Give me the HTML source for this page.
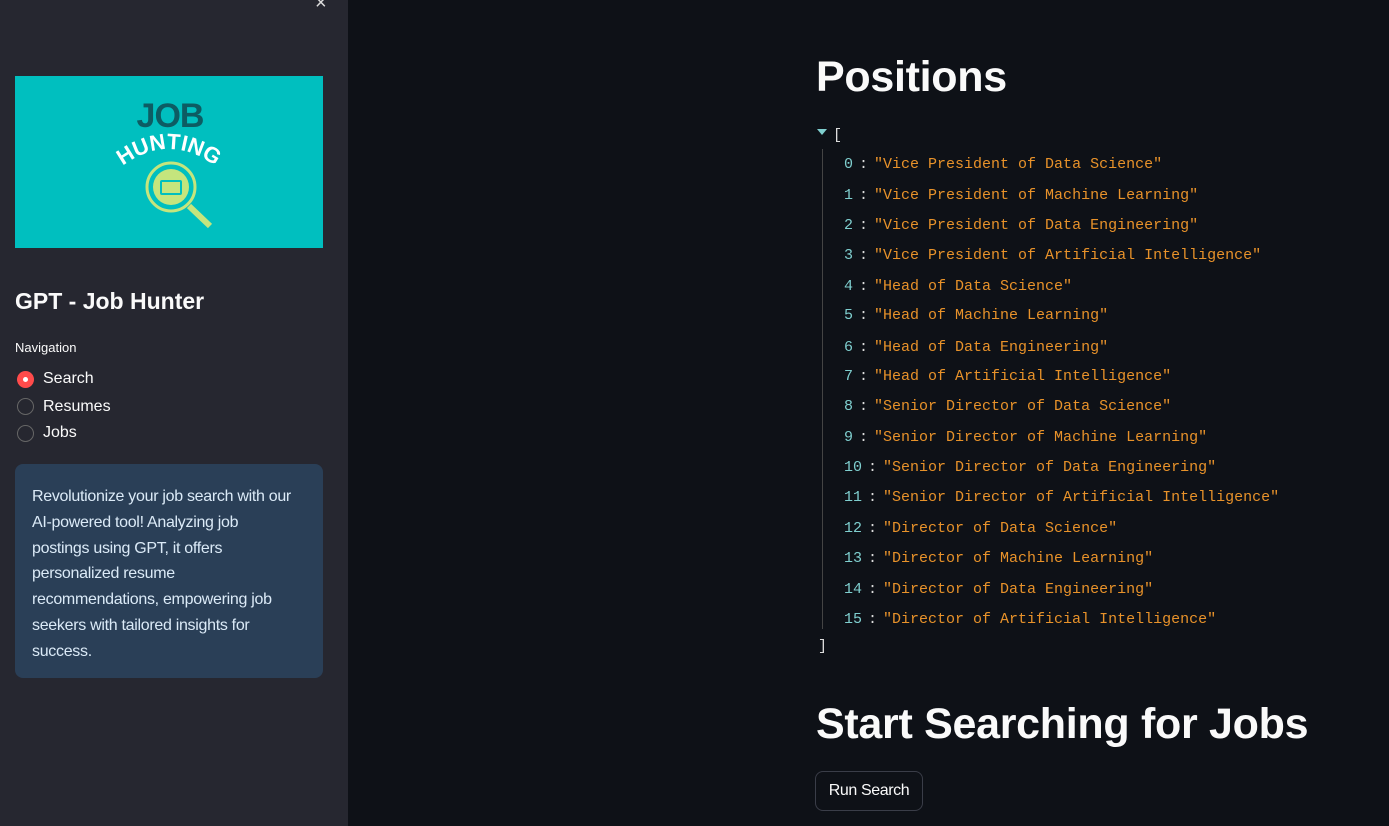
<!DOCTYPE html>
<html><head><meta charset="utf-8"><style>
*{margin:0;padding:0;box-sizing:border-box}
body{width:1389px;height:826px;background:#0e1117;font-family:"Liberation Sans",sans-serif;position:relative;overflow:hidden;color:#fafafa}
.sb{position:absolute;left:0;top:0;width:348px;height:826px;background:#262730}
.abs{position:absolute}
.rows{position:absolute;left:844px;top:2px}
.row{position:absolute;left:0;font-family:"Liberation Mono",monospace;font-size:15px;white-space:pre;line-height:18px}
.k{color:#7fcfcf}.c{color:#ddd;margin:0 6px}.s{color:#e8922a}
.radio{position:absolute;left:17px;width:17px;height:17px;border-radius:50%;border:1px solid #666}
.rl{position:absolute;left:43px;font-size:16px;color:#fafafa}
</style></head><body>
<div class="sb">
<div class="abs" style="left:315px;top:-8px;font-size:20px;color:#ddd">×</div>
<div class="abs" style="left:15px;top:76px;width:308px;height:172px;background:#00bfbf">
<svg width="308" height="172" viewBox="0 0 308 172">
<text x="155" y="51" text-anchor="middle" font-family="Liberation Sans" font-weight="bold" font-size="34" fill="#0d5c63" letter-spacing="-1">JOB</text>
<path id="arc" d="M100 96 Q154 50 208 96" fill="none"/>
<text font-family="Liberation Sans" font-weight="bold" font-size="22" fill="#fff"><textPath href="#arc" startOffset="50%" text-anchor="middle">HUNTING</textPath></text>
<circle cx="156" cy="111" r="24" fill="none" stroke="#c5e57d" stroke-width="3"/>
<circle cx="156" cy="111" r="18" fill="#c5e57d"/>
<rect x="145" y="104" width="22" height="15" fill="#00bfbf" rx="2"/>
<rect x="147" y="106" width="18" height="11" fill="#c5e57d"/>
<line x1="174" y1="130" x2="195" y2="150" stroke="#c5e57d" stroke-width="6"/>
</svg></div>
<div class="abs" style="left:15px;top:288px;font-size:23px;font-weight:bold">GPT - Job Hunter</div>
<div class="abs" style="left:15px;top:340px;font-size:13px">Navigation</div>
<div class="radio" style="top:371px;background:#ff4b4b;border-color:#ff4b4b"><div style="position:absolute;left:5px;top:5px;width:5px;height:5px;border-radius:50%;background:#fff"></div></div>
<div class="rl" style="top:370px">Search</div>
<div class="radio" style="top:398px"></div><div class="rl" style="top:398px">Resumes</div>
<div class="radio" style="top:425px"></div><div class="rl" style="top:424px">Jobs</div>
<div class="abs" style="left:15px;top:464px;width:308px;height:214px;background:#2a3f57;border-radius:8px;padding:20px 10px 0 17px;font-size:16px;line-height:25.8px;color:#dbeaf7;letter-spacing:-0.3px;white-space:nowrap">Revolutionize your job search with our<br>AI-powered tool! Analyzing job<br>postings using GPT, it offers<br>personalized resume<br>recommendations, empowering job<br>seekers with tailored insights for<br>success.</div>
</div>
<div class="abs" style="left:816px;top:53px;font-size:43px;font-weight:bold;letter-spacing:-0.3px">Positions</div>
<svg class="abs" style="left:817px;top:129px" width="10" height="7"><path d="M0 0L10 0L5 6Z" fill="#7fcfcf"/></svg>
<div class="abs" style="left:833px;top:127px;font-family:'Liberation Mono',monospace;font-size:15px;color:#ddd">[</div>
<div class="abs" style="left:822px;top:149px;width:1px;height:480px;background:#444"></div>
<div class="rows">
<div class="row" style="top:154px"><span class="k">0</span><span class="c">:</span><span class="s">"Vice President of Data Science"</span></div>
<div class="row" style="top:185px"><span class="k">1</span><span class="c">:</span><span class="s">"Vice President of Machine Learning"</span></div>
<div class="row" style="top:215px"><span class="k">2</span><span class="c">:</span><span class="s">"Vice President of Data Engineering"</span></div>
<div class="row" style="top:245px"><span class="k">3</span><span class="c">:</span><span class="s">"Vice President of Artificial Intelligence"</span></div>
<div class="row" style="top:276px"><span class="k">4</span><span class="c">:</span><span class="s">"Head of Data Science"</span></div>
<div class="row" style="top:305px"><span class="k">5</span><span class="c">:</span><span class="s">"Head of Machine Learning"</span></div>
<div class="row" style="top:337px"><span class="k">6</span><span class="c">:</span><span class="s">"Head of Data Engineering"</span></div>
<div class="row" style="top:366px"><span class="k">7</span><span class="c">:</span><span class="s">"Head of Artificial Intelligence"</span></div>
<div class="row" style="top:396px"><span class="k">8</span><span class="c">:</span><span class="s">"Senior Director of Data Science"</span></div>
<div class="row" style="top:427px"><span class="k">9</span><span class="c">:</span><span class="s">"Senior Director of Machine Learning"</span></div>
<div class="row" style="top:457px"><span class="k">10</span><span class="c">:</span><span class="s">"Senior Director of Data Engineering"</span></div>
<div class="row" style="top:487px"><span class="k">11</span><span class="c">:</span><span class="s">"Senior Director of Artificial Intelligence"</span></div>
<div class="row" style="top:518px"><span class="k">12</span><span class="c">:</span><span class="s">"Director of Data Science"</span></div>
<div class="row" style="top:548px"><span class="k">13</span><span class="c">:</span><span class="s">"Director of Machine Learning"</span></div>
<div class="row" style="top:579px"><span class="k">14</span><span class="c">:</span><span class="s">"Director of Data Engineering"</span></div>
<div class="row" style="top:609px"><span class="k">15</span><span class="c">:</span><span class="s">"Director of Artificial Intelligence"</span></div>
</div>
<div class="abs" style="left:818px;top:638px;font-family:'Liberation Mono',monospace;font-size:15px;color:#ddd">]</div>
<div class="abs" style="left:816px;top:700px;font-size:43px;font-weight:bold;letter-spacing:-0.3px">Start Searching for Jobs</div>
<div class="abs" style="left:815px;top:771px;width:108px;height:40px;border:1px solid #3a3d48;border-radius:8px;font-size:16px;text-align:center;line-height:38px;letter-spacing:-0.4px">Run Search</div>
</body></html>
